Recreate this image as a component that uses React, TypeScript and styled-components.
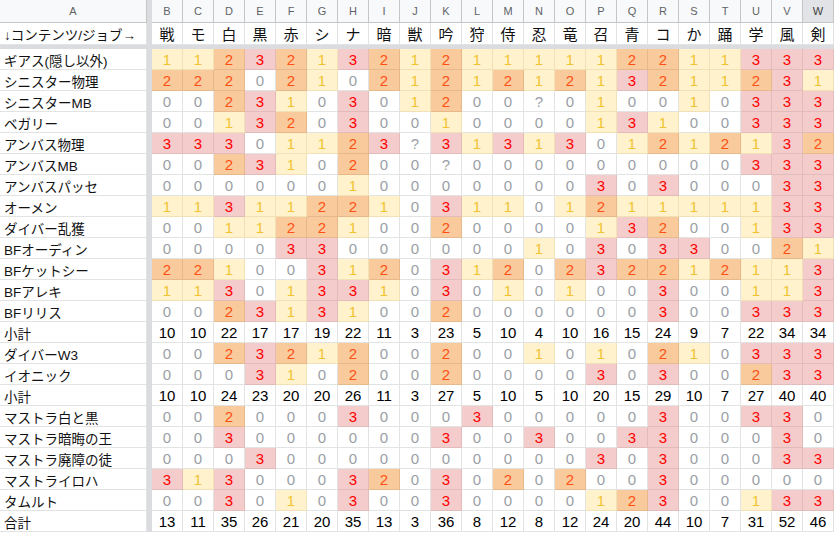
import React from "react";
import styled, { createGlobalStyle, css } from "styled-components";

const Global = createGlobalStyle`
  html, body { margin: 0; padding: 0; background: #fff; overflow: hidden; }
  body { font-family: "Liberation Sans", "Noto Sans CJK JP", Arial, sans-serif; }
`;

const COLS = "147px 5px repeat(22, 31px)";
const GRID = "#e2e3e3";

const Sheet = styled.div`
  width: 834px;
  height: 533px;
  display: flex;
  flex-direction: column;
  overflow: hidden;
`;

const Row = styled.div<{ $h: number }>`
  display: grid;
  grid-template-columns: ${COLS};
  height: ${(p) => p.$h}px;
  flex: none;
`;

const FreezeH = styled.div`
  height: 4px;
  flex: none;
  background: #dadce0;
`;

const FreezeV = styled.div`
  background: #dadce0;
`;

const ColHead = styled.div<{ $active?: boolean }>`
  display: flex;
  align-items: center;
  justify-content: center;
  background: ${(p) => (p.$active ? "#e1e3e6" : "#f8f9fa")};
  color: ${(p) => (p.$active ? "#3c4043" : "#5f6368")};
  font-family: "Liberation Sans", Arial, sans-serif;
  font-size: 11px;
  border-right: 1px solid #c4c7c5;
  border-bottom: 1px solid #c4c7c5;
  box-sizing: border-box;
`;

const LabelCell = styled.div`
  display: flex;
  align-items: center;
  padding-left: 4px;
  padding-top: 1px;
  font-size: 13.5px;
  color: #111;
  white-space: nowrap;
  overflow: hidden;
  border-right: 1px solid ${GRID};
  border-bottom: 1px solid ${GRID};
  box-sizing: border-box;
  font-family: "Liberation Sans", "Noto Sans CJK JP", sans-serif;
`;

const JobCell = styled.div`
  display: flex;
  align-items: center;
  justify-content: center;
  font-size: 15px;
  color: #111;
  border-right: 1px solid ${GRID};
  border-bottom: 1px solid ${GRID};
  box-sizing: border-box;
  font-family: "Noto Sans CJK JP", sans-serif;
`;

type Level = "0" | "1" | "2" | "3" | "?" | "t";

const levelStyles: Record<Level, ReturnType<typeof css>> = {
  "0": css`background: #fff; color: #9aa0a6; border-color: ${GRID};`,
  "?": css`background: #fff; color: #9aa0a6; border-color: ${GRID};`,
  "1": css`background: #fff2cc; color: #f1c232; border-color: #f0e1b6;`,
  "2": css`background: #f9cb9c; color: #ff5014; border-color: #e6b98d;`,
  "3": css`background: #f4cccc; color: #ff0000; border-color: #e2bbbb;`,
  t: css`background: #fff; color: #000; border-color: ${GRID};`,
};

const ValueCell = styled.div<{ $lv: Level }>`
  display: flex;
  align-items: center;
  justify-content: center;
  font-family: "Liberation Sans", Arial, sans-serif;
  font-size: 15px;
  padding-top: 1px;
  border-right: 1px solid;
  border-bottom: 1px solid;
  box-sizing: border-box;
  ${(p) => levelStyles[p.$lv]}
`;

const letters = "BCDEFGHIJKLMNOPQRSTUVW".split("");
const jobs = ["戦", "モ", "白", "黒", "赤", "シ", "ナ", "暗", "獣", "吟", "狩", "侍", "忍", "竜", "召", "青", "コ", "か", "踊", "学", "風", "剣"];

type DataRow = { label: string; values: string | number[] };

const rows: DataRow[] = [
  { label: "ギアス(隠し以外)", values: "1123213212111112211333" },
  { label: "シニスター物理", values: "2220210212121213211231" },
  { label: "シニスターMB", values: "002310301200?010010333" },
  { label: "ベガリー", values: "0013203001000013100333" },
  { label: "アンバス物理", values: "33301123?3131301212132" },
  { label: "アンバスMB", values: "002310200?000000000333" },
  { label: "アンバスパッセ", values: "0000001000000030300033" },
  { label: "オーメン", values: "1131122103110121111133" },
  { label: "ダイバー乱獲", values: "0011221002000013200133" },
  { label: "BFオーディン", values: "0000330000001030330021" },
  { label: "BFケットシー", values: "2210031203120232212113" },
  { label: "BFアレキ", values: "1130133103010100300113" },
  { label: "BFリリス", values: "0023131002000000300333" },
  { label: "小計", values: [10, 10, 22, 17, 17, 19, 22, 11, 3, 23, 5, 10, 4, 10, 16, 15, 24, 9, 7, 22, 34, 34] },
  { label: "ダイバーW3", values: "0023212002001010210333" },
  { label: "イオニック", values: "0003102002000030300233" },
  { label: "小計", values: [10, 10, 24, 23, 20, 20, 26, 11, 3, 27, 5, 10, 5, 10, 20, 15, 29, 10, 7, 27, 40, 40] },
  { label: "マストラ白と黒", values: "0020003000300000300330" },
  { label: "マストラ暗晦の王", values: "0030000003003003300030" },
  { label: "マストラ廃障の徒", values: "0003000000000030300033" },
  { label: "マストライロハ", values: "3130003203020200300000" },
  { label: "タムルト", values: "0030103003000012300133" },
  { label: "合計", values: [13, 11, 35, 26, 21, 20, 35, 13, 3, 36, 8, 12, 8, 12, 24, 20, 44, 10, 7, 31, 52, 46] },
];

function cellsOf(v: string | number[]): { lv: Level; text: string }[] {
  if (typeof v === "string") {
    return v.split("").map((c) => ({ lv: c as Level, text: c }));
  }
  return v.map((n) => ({ lv: "t" as Level, text: String(n) }));
}

export default function App() {
  return (
    <>
      <Global />
      <Sheet>
        <Row $h={23}>
          <ColHead>A</ColHead>
          <FreezeV />
          {letters.map((l) => (
            <ColHead key={l} $active={l === "W"}>
              {l}
            </ColHead>
          ))}
        </Row>
        <Row $h={22}>
          <LabelCell>↓コンテンツ/ジョブ→</LabelCell>
          <FreezeV />
          {jobs.map((j) => (
            <JobCell key={j}>{j}</JobCell>
          ))}
        </Row>
        <FreezeH />
        {rows.map((r, i) => (
          <Row $h={21} key={i}>
            <LabelCell>{r.label}</LabelCell>
            <FreezeV />
            {cellsOf(r.values).map((c, k) => (
              <ValueCell key={k} $lv={c.lv}>
                {c.text}
              </ValueCell>
            ))}
          </Row>
        ))}
      </Sheet>
    </>
  );
}
